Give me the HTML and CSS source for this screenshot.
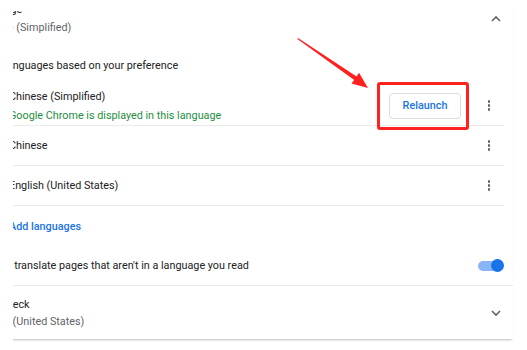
FILE: index.html
```html
<!DOCTYPE html>
<html lang="en">
<head>
    <meta charset="UTF-8">
    <meta name="viewport" content="width=device-width, initial-scale=1.0">
    <title>Languages</title>
    <link rel="stylesheet" href="styles.css">
</head>
<body>
    <div class="clip">
        <div class="card">
            <div class="row header">
                <div class="label">
                    <div>Language</div>
                    <div class="secondary">Chinese (Simplified)</div>
                </div>
                <span class="chevron">
                    <svg width="12" height="12" viewBox="0 0 12 12"><path d="M2 8 L6 4 L10 8" fill="none" stroke="#5f6368" stroke-width="1.6"/></svg>
                </span>
            </div>
            <div class="row plain">Order languages based on your preference</div>
            <div class="lang-list">
                <div class="lang-row tall">
                    <div class="label">
                        <div>Chinese (Simplified)</div>
                        <div class="green">Google Chrome is displayed in this language</div>
                    </div>
                    <button class="relaunch">Relaunch</button>
                    <span class="kebab"><i></i><i></i><i></i></span>
                </div>
                <div class="lang-row">
                    <div class="label">Chinese</div>
                    <span class="kebab"><i></i><i></i><i></i></span>
                </div>
                <div class="lang-row">
                    <div class="label">English (United States)</div>
                    <span class="kebab"><i></i><i></i><i></i></span>
                </div>
                <div class="add-row"><a href="#">Add languages</a></div>
            </div>
            <div class="row translate">
                <div class="label">Offer to translate pages that aren't in a language you read</div>
                <span class="toggle"><span class="knob"></span></span>
            </div>
            <div class="row spell">
                <div class="label">
                    <div>Spell check</div>
                    <div class="secondary">English (United States)</div>
                </div>
                <span class="chevron">
                    <svg width="12" height="12" viewBox="0 0 12 12"><path d="M2 4 L6 8 L10 4" fill="none" stroke="#5f6368" stroke-width="1.6"/></svg>
                </span>
            </div>
        </div>
    </div>

    <div class="mark-box"></div>
    <svg class="mark-arrow" width="527" height="350" viewBox="0 0 527 350">
        <polygon points="298,38 356.6,76.4 359,72.8 368,88 351.5,83.4 354.2,79.9 297.4,39" fill="#ff2020"/>
    </svg>
</body>
</html>
```

FILE: styles.css
```css
body {
    margin: 0;
    background: #fff;
    font-family: Roboto, "Noto Sans", Arial, sans-serif;
    font-size: 10.8px;
    color: #202124;
    overflow: hidden;
}
.clip {
    margin: 11px 0 0 13px;
    width: 514px;
    padding-bottom: 4px;
    overflow: hidden;
}
.card {
    margin: -11px 0 0 -54px;
    width: 554px;
    background: #fff;
    box-shadow: 0 2px 2px -1px rgba(60, 64, 67, 0.35);
}
.row {
    display: flex;
    align-items: center;
    padding-left: 16px;
    box-sizing: border-box;
}
.label { flex: 1; }
.secondary { color: #5f6368; }
.header { height: 45px; align-items: flex-start; line-height: 18px; padding-top: 1px; }
.header .chevron { margin-top: 12px; }
.chevron { width: 12px; height: 12px; margin-right: 11px; display: flex; }
.plain { height: 40px; }

.lang-list { margin-left: 50px; padding-top: 1px; }
.lang-row {
    display: flex;
    align-items: center;
    height: 40px;
    margin-right: 9px;
    border-bottom: 1px solid #ebebeb;
    box-sizing: border-box;
}
.lang-row.tall .label { line-height: 19px; }
.green { color: #1e8e3e; }
.relaunch {
    width: 72px;
    height: 26px;
    margin-right: 22px;
    background: #fff;
    border: 1px solid #dadce0;
    border-radius: 4px;
    color: #1a73e8;
    font: 500 10.8px Roboto, sans-serif;
    padding: 0;
}
.kebab {
    width: 12px;
    margin-right: 9px;
    display: flex;
    flex-direction: column;
    align-items: center;
    gap: 1.6px;
}
.kebab i {
    display: block;
    width: 2.6px;
    height: 2.6px;
    border-radius: 50%;
    background: #5f6368;
}
.add-row { height: 40px; display: flex; align-items: center; }
.add-row a { color: #1a73e8; font-weight: 500; text-decoration: none; }

.translate { height: 40px; border-bottom: 1px solid #ebebeb; }
.toggle {
    position: relative;
    width: 26px;
    height: 13px;
    margin-right: 9px;
    display: flex;
    align-items: center;
}
.toggle::before {
    content: "";
    width: 22px;
    height: 10px;
    border-radius: 5px;
    background: #8ab4f8;
}
.knob {
    position: absolute;
    right: 0;
    top: 0;
    width: 13px;
    height: 13px;
    border-radius: 50%;
    background: #1a73e8;
}
.spell { height: 53px; line-height: 17px; }

.mark-box {
    position: absolute;
    left: 377px;
    top: 82px;
    width: 92px;
    height: 48px;
    box-sizing: border-box;
    border: 3px solid #ff2020;
    border-radius: 3px;
}
.mark-arrow { position: absolute; left: 0; top: 0; pointer-events: none; }
```
